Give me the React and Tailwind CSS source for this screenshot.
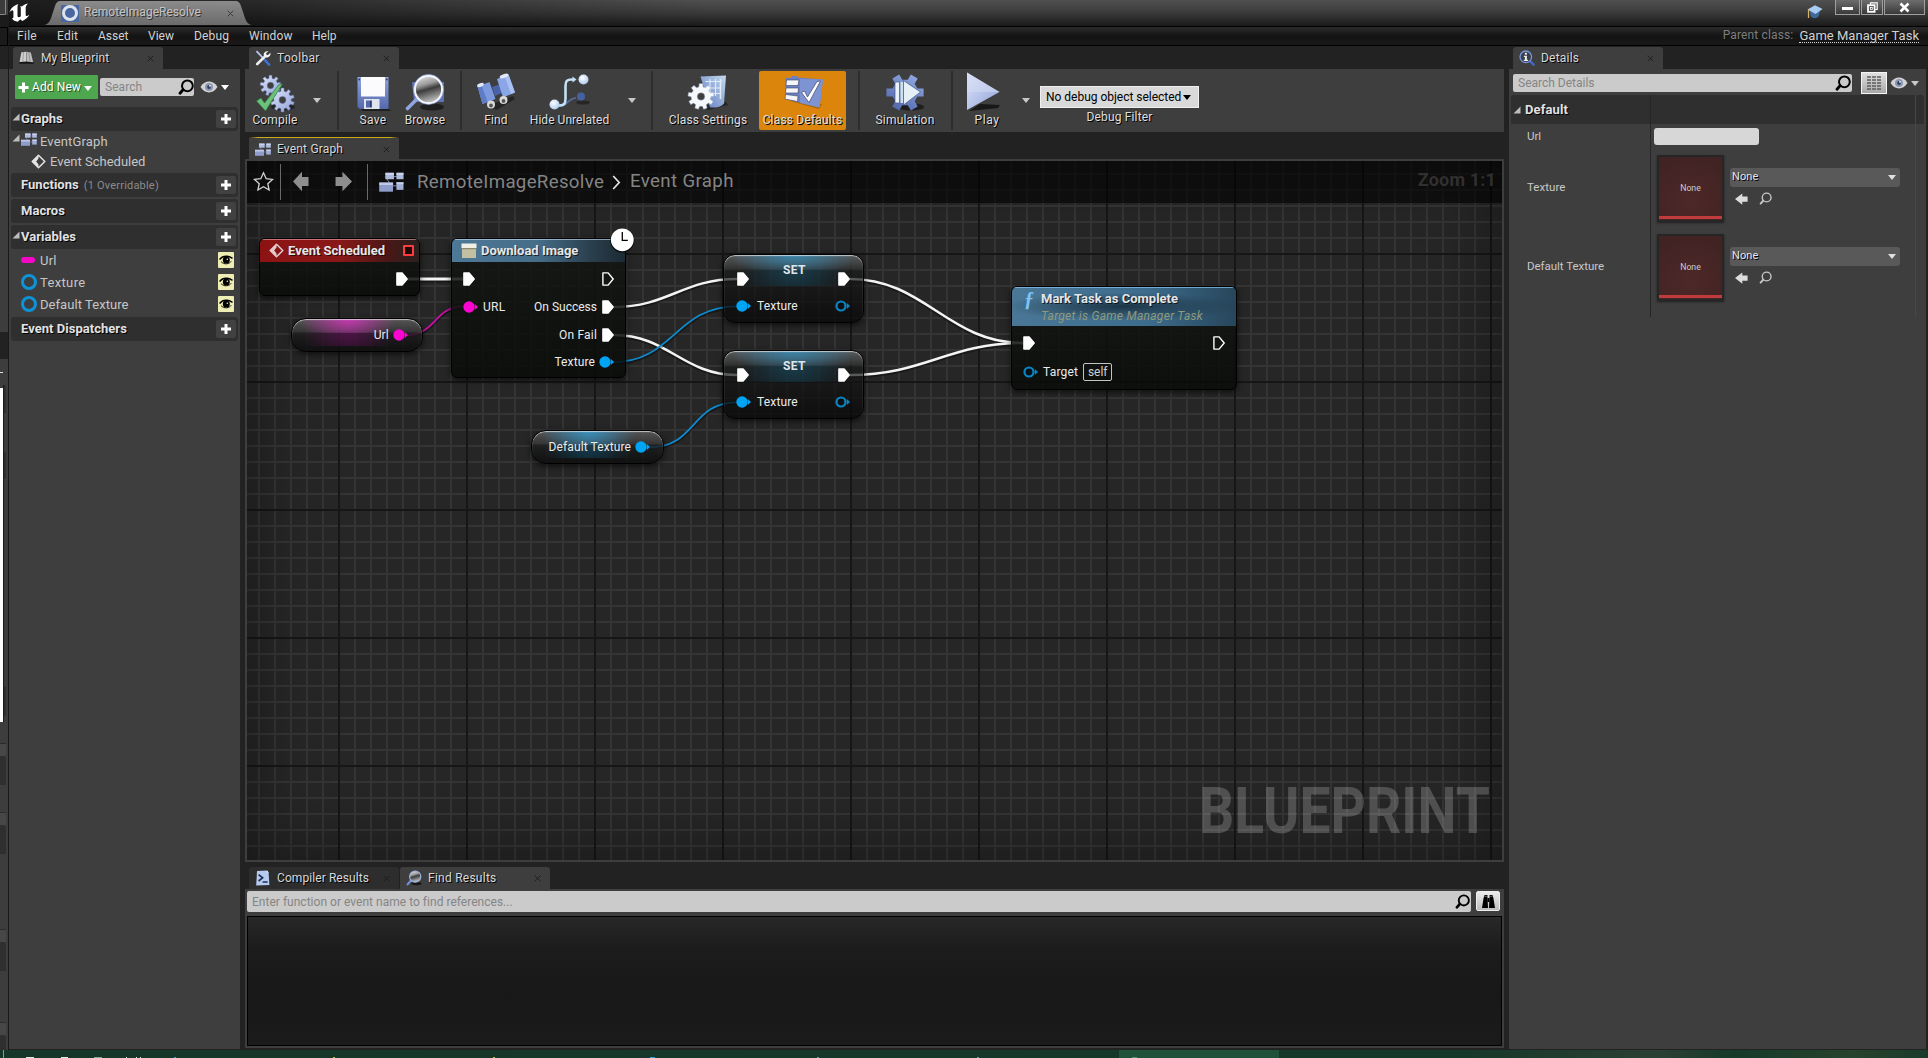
import React from "react";

/* ---------- icons ---------- */

function gearPath(cx, cy, outer, inner, teeth, hole) {
  const pts = [];
  const step = (Math.PI * 2) / teeth;
  for (let i = 0; i < teeth; i++) {
    const a = i * step - Math.PI / 2;
    [[-0.3, inner], [-0.2, outer], [0.2, outer], [0.3, inner]].forEach(([f, r]) => {
      pts.push(`${(cx + Math.cos(a + f * step) * r).toFixed(2)} ${(cy + Math.sin(a + f * step) * r).toFixed(2)}`);
    });
  }
  return `M${pts.join("L")}Z M${cx - hole} ${cy}a${hole} ${hole} 0 1 0 ${hole * 2} 0a${hole} ${hole} 0 1 0 ${-hole * 2} 0Z`;
}

const Defs = () => (
  <svg className="absolute h-0 w-0" aria-hidden="true">
    <defs>
      <linearGradient id="steel" x1="0" y1="0" x2="1" y2="1">
        <stop offset="0" stopColor="#dfe6fa" />
        <stop offset="1" stopColor="#8fa1d8" />
      </linearGradient>
      <linearGradient id="blueFace" x1="1" y1="0" x2="0" y2="1">
        <stop offset="0" stopColor="#c3dbee" />
        <stop offset="1" stopColor="#5f78c0" />
      </linearGradient>
      <linearGradient id="floppy" x1="0" y1="0" x2="0" y2="1">
        <stop offset="0" stopColor="#8ea5dd" />
        <stop offset="1" stopColor="#5469ad" />
      </linearGradient>
      <linearGradient id="lens" x1="0" y1="0" x2="0.3" y2="1">
        <stop offset="0" stopColor="#f2f2f2" />
        <stop offset="0.4" stopColor="#9a9a9a" />
        <stop offset="0.58" stopColor="#3c3c3c" />
        <stop offset="1" stopColor="#b8b8b8" />
      </linearGradient>
      <radialGradient id="ball" cx="0.4" cy="0.35" r="0.7">
        <stop offset="0" stopColor="#ffffff" />
        <stop offset="1" stopColor="#a9c9ee" />
      </radialGradient>
    </defs>
  </svg>
);

const Caret = ({ className = "", w = 8, h = 5, color = "#fff" }) => (
  <svg className={className} width={w} height={h} viewBox="0 0 8 5">
    <path d="M0 0h8L4 5z" fill={color} />
  </svg>
);

const Expander = ({ className = "" }) => (
  <svg className={className} width="8" height="8" viewBox="0 0 8 8">
    <path d="M7.5 0.5v7h-7z" fill="#bdbdbd" />
  </svg>
);

const Close = () => (
  <svg width="7" height="7" viewBox="0 0 7 7">
    <path d="M0.7 0.7l5.6 5.6M6.3 0.7L0.7 6.3" stroke="#1c1c1c" strokeWidth="0.9" />
  </svg>
);

const Lens = ({ size = 16, color = "#000", sw = 2 }) => (
  <svg width={size} height={size} viewBox="0 0 16 16" fill="none" stroke={color} strokeWidth={sw} strokeLinecap="round">
    <circle cx="9.4" cy="6.8" r="5.4" />
    <path d="M5 10.8l-3 3.4" strokeWidth={sw * 1.4} />
  </svg>
);

const Eye = () => (
  <svg width="18" height="12" viewBox="0 0 18 12">
    <path d="M0.5 6C3 2 6 0.6 9 0.6S15 2 17.5 6C15 10 12 11.4 9 11.4S3 10 0.5 6z" fill="#d3d3d3" />
    <circle cx="9" cy="6" r="4" fill="#8a97b4" />
    <circle cx="9" cy="6" r="1.9" fill="#33415f" />
    <circle cx="10" cy="4.8" r="0.9" fill="#fff" />
  </svg>
);

const GraphIcon = ({ w = 16, h = 13 }) => (
  <svg width={w} height={h} viewBox="0 0 16 13">
    <path d="M4 3L8 9M8 9h5M9 3h4" stroke="#8b97bb" strokeWidth="0.6" />
    <rect x="4" y="0.5" width="5.6" height="4.2" fill="#aebade" />
    <rect x="11.2" y="0.5" width="4.6" height="4.2" fill="#aebade" />
    <path d="M0 6.8h9v6H0z" fill="#8f9dca" />
    <rect x="11.2" y="6.6" width="4.6" height="5" fill="#a1aed6" />
    <path d="M4 0.5h5.6v1.4H4zM11.2 0.5h4.6v1.4h-4.6zM0 6.8h9v1.6H0zM11.2 6.6h4.6v1.4h-4.6z" fill="#d4dcf5" opacity="0.7" />
  </svg>
);

const EventDiamond = ({ size = 15, color = "#e4e4e4" }) => (
  <svg width={size} height={size} viewBox="0 0 15 15">
    <path d="M7.5 1.2l6.3 6.3-6.3 6.3-6.3-6.3z" fill="none" stroke={color} strokeWidth="1.5" strokeLinejoin="round" />
    <path d="M7.5 1.2v3.400L5.200 7.500l2.300 2.900v3.400L1.200 7.500z" fill={color} />
  </svg>
);

const Book = () => (
  <svg width="15" height="14" viewBox="0 0 15 14">
    <path d="M1 10.5h13l1 2.2H0z" fill="#161616" />
    <path d="M2.4 1.2L7 0.8 7 10.6 0.6 11z" fill="#cfcfcf" />
    <path d="M7.4 0.8l4.4 0.6 2.4 9.8-6.8-0.6z" fill="#bcbcbc" />
    <path d="M4.6 1l-0.8 10M9.8 1l1.2 10" stroke="#8a8a8a" strokeWidth="0.7" />
  </svg>
);

const Tools = () => (
  <svg width="16" height="16" viewBox="0 0 16 16">
    <path d="M1.5 1.2L9.5 9.6" stroke="#b9c6f0" strokeWidth="1.8" />
    <path d="M9.5 9.6l4.6 5" stroke="#3f6fd0" strokeWidth="2.6" strokeLinecap="round" />
    <path d="M2.2 14L9.8 6.6" stroke="#ededed" strokeWidth="2.6" strokeLinecap="round" />
    <path d="M13.6 0.9l-2.5 2.4 0.3 1.5 1.6 0.3 2.4-2.4c0.5 2-0.4 3.9-2.4 4.6-1.5 0.5-3.2-0.1-4-1.6-0.8-1.7 0-4.6 4.6-4.8z" fill="#f4f4f4" />
  </svg>
);

const DetailsIcon = () => (
  <svg width="16" height="16" viewBox="0 0 16 16">
    <path d="M10.6 10.6l4 4" stroke="#4468c8" strokeWidth="2.4" strokeLinecap="round" />
    <circle cx="6.8" cy="6.8" r="5.8" fill="#3a3f4c" stroke="#7795dd" strokeWidth="1.3" />
    <rect x="5.9" y="2.8" width="2" height="1.9" fill="#eee" />
    <path d="M4.9 5.8h3v4h1.1v1.2H4.8V9.8h1.1V7H4.9z" fill="#eee" />
  </svg>
);

const ScriptIcon = () => (
  <svg width="15" height="16" viewBox="0 0 15 16">
    <path d="M2 1l10-0.6 1.6 2L14.4 15 1.2 15.4z" fill="#b6c9ee" />
    <path d="M12 0.4l1.6 2-2 0.2z" fill="#f2f6ff" />
    <path d="M3.6 4.6l4 3.2-4 3.2M7.6 12h5" fill="none" stroke="#1e2e52" strokeWidth="1.7" />
  </svg>
);

const FindIcon = () => (
  <svg width="16" height="16" viewBox="0 0 16 16">
    <ellipse cx="10.5" cy="13.6" rx="5" ry="1.6" fill="#161616" />
    <path d="M1.6 14.4l4-4.6" stroke="#6f8fdc" strokeWidth="2.2" strokeLinecap="round" />
    <circle cx="9.2" cy="6.6" r="5.6" fill="url(#lens)" stroke="#9fb2e2" strokeWidth="1.2" />
  </svg>
);

const UnrealLogo = () => (
  <svg width="22" height="20" viewBox="0 0 22 20">
    <path
      d="M9.4 1.2C5.6 1.9 1.6 4.9 0.4 9.6c1.2-1.6 2.5-2.4 3.4-2.2 0.5 0.1 0.6 0.6 0.6 1.3v5.4c0 1-0.6 1.4-1.5 1.2 1.3 2.2 3.3 3.2 5.9 3.4l2.5-2.4 1.9 1.6c3.4-1.2 5.9-3.6 7.3-6.4-0.9 0.8-2 1.5-2.9 1.5-0.6 0-0.9-0.4-0.9-1.1V4.6c0-1.3 0.7-2.4 2.2-4.2-2.6 0.6-4.8 1.9-6.2 3.2-0.5-0.4-1-0.5-1.8-0.4 0.7 0.4 0.9 0.9 0.9 1.7v8.3c-0.5 0.7-1.1 1-1.9 1-1 0-1.4-0.6-1.4-1.6V5.2C8.500 3.400 8.600 2.300 9.400 1.200z"
      fill="#fff"
    />
  </svg>
);

const CompileIcon = () => (
  <svg width="44" height="40" viewBox="0 0 44 40">
    <ellipse cx="30" cy="34" rx="12" ry="3.4" fill="#1b1b1b" opacity="0.75" />
    <path fillRule="evenodd" d={gearPath(17.5, 12.5, 10.4, 7.4, 9, 3.2)} fill="url(#steel)" stroke="#5a6a9c" strokeWidth="0.5" />
    <path fillRule="evenodd" d={gearPath(29.5, 27, 12, 8.8, 10, 3.4)} fill="url(#steel)" stroke="#5a6a9c" strokeWidth="0.5" />
    <path d="M3.500 28l4.500-3 3.500 5L26 11.500l3.500-0.500L12.500 38z" fill="#6bc07a" stroke="#2f7d3f" strokeWidth="0.7" />
  </svg>
);

const SaveIcon = () => (
  <svg width="38" height="38" viewBox="0 0 38 38">
    <path d="M6 33h28l3 3H8z" fill="#1b1b1b" opacity="0.85" />
    <path d="M3.500 2h31v32H6l-2.500-2z" fill="url(#floppy)" />
    <path d="M7 2h24v19.500H7z" fill="#fbfbfd" />
    <circle cx="5.2" cy="4.500" r="0.900" fill="#2c3a6d" />
    <circle cx="32.800" cy="4.500" r="0.900" fill="#2c3a6d" />
    <path d="M10 24h15.500v10H10z" fill="#dfe4ee" />
    <path d="M12 25.500h4v7h-4z" fill="#5469ad" />
    <path d="M16 25.500h1.800v7H16z" fill="#2c3a6d" />
  </svg>
);

const BrowseIcon = () => (
  <svg width="42" height="40" viewBox="0 0 42 40">
    <ellipse cx="28" cy="34" rx="12" ry="3.600" fill="#161616" opacity="0.8" />
    <path d="M8 9h32v20H10z" fill="#5c73b8" />
    <path d="M3.500 35.500L13 26" stroke="#8fa6e0" strokeWidth="3.600" strokeLinecap="round" />
    <circle cx="24.500" cy="16.500" r="14" fill="url(#lens)" />
    <circle cx="24.500" cy="16.500" r="13.800" fill="none" stroke="#f2f5fc" strokeWidth="2.400" />
    <circle cx="24.500" cy="16.500" r="15.100" fill="none" stroke="#7f95cf" strokeWidth="0.600" />
  </svg>
);

const FindBigIcon = () => (
  <svg width="42" height="40" viewBox="0 0 42 40">
    <path d="M12 33l26-10 2 3-18 11z" fill="#1b1b1b" opacity="0.7" />
    <path d="M17 14l9-3 3 8-9 4z" fill="#4a62a8" />
    <path d="M2.500 13.500l12-4.500 6 17-13 5z" fill="#7c9ae0" />
    <path d="M2.500 13.500l4-1.500 6 17-5 2z" fill="#5f7cc6" />
    <path d="M22 6l11.500-4.500 6.500 18-12 5z" fill="#8aa6e6" />
    <path d="M33.500 1.500l6.500 18-4 1.600-6.500-18z" fill="#a9c0f2" />
    <ellipse cx="5.500" cy="12" rx="3.500" ry="1.800" fill="#e2e8f6" transform="rotate(-20 5.500 12)" />
    <ellipse cx="29" cy="3" rx="4.500" ry="1.800" fill="#e2e8f6" transform="rotate(-20 29 3)" />
    <circle cx="16" cy="31.500" r="4" fill="#d9d9d9" />
    <circle cx="16" cy="32.500" r="1.900" fill="#555" />
    <circle cx="28.500" cy="27" r="4" fill="#d9d9d9" />
    <circle cx="28.500" cy="28" r="1.900" fill="#555" />
  </svg>
);

const HideIcon = () => (
  <svg width="44" height="40" viewBox="0 0 44 40">
    <ellipse cx="35" cy="29.500" rx="7" ry="2" fill="#1d1d1d" opacity="0.7" />
    <path d="M10 33.500c10 0 10-8.500 18-8.500" fill="none" stroke="#5a6f9f" strokeWidth="1.700" />
    <circle cx="33" cy="23.500" r="4" fill="#4661a3" />
    <path d="M7 32.500h4.500c5 0 6-2 6-7V13c0-5 1.500-6.500 6-6.500h2" fill="none" stroke="#c3e2f5" strokeWidth="2.600" />
    <path d="M24.500 3.500l4 3-4 3z" fill="#c3e2f5" />
    <circle cx="6.500" cy="31.500" r="5" fill="url(#ball)" />
    <circle cx="35.500" cy="6.500" r="5" fill="url(#ball)" />
  </svg>
);

const ClassSettingsIcon = () => (
  <svg width="44" height="40" viewBox="0 0 44 40">
    <path d="M14 34l26-5 2 3-20 5z" fill="#1b1b1b" opacity="0.7" />
    <path d="M14.500 3.500L40 2.500l-2 28c-3 3.500-8 4.500-14 4z" fill="url(#blueFace)" />
    <path d="M19.500 8.500h16M19.500 15h15.500M24 20.500h10.500M24 6v17M29.500 6v17" stroke="#e8f1fb" strokeWidth="1.100" fill="none" opacity="0.9" />
    <path d="M34.500 6v20" stroke="#e8f1fb" strokeWidth="1.500" opacity="0.9" />
    <path fillRule="evenodd" d={gearPath(15, 23.500, 13, 9.800, 9, 3.800)} fill="#f6f9fc" stroke="#a9b6cf" strokeWidth="0.500" />
  </svg>
);

const ClassDefaultsIcon = () => (
  <svg width="44" height="40" viewBox="0 0 44 40">
    <path d="M9 28l29 8 3-5z" fill="#7c4a04" opacity="0.5" />
    <path d="M4.500 5l6-0.500 0.500-1.500h5l1 1.500L42 6.500 38.500 34.500 4 26z" fill="#6c80c2" />
    <path d="M19 6l23 0.500L38.500 34.500 19 30z" fill="#7e93d2" />
    <g fill="#f6f6f6" stroke="#3a456f" strokeWidth="0.600">
      <path d="M5.500 7h12.500l-1 5.500H5z" />
      <path d="M5 15h12.500l-0.500 5H4.500z" />
      <path d="M4.500 21.500L17 23l-0.500 5.500L4 26z" />
    </g>
    <path d="M20.500 19.500l3-1.500 3 6L36 8.500l3.500-0.500L28 29.500z" fill="#fff" stroke="#3a456f" strokeWidth="0.700" />
  </svg>
);

const SimulationIcon = () => (
  <svg width="44" height="40" viewBox="0 0 44 40">
    <ellipse cx="28" cy="34" rx="13" ry="3.600" fill="#161616" opacity="0.8" />
    <path fillRule="evenodd" d={gearPath(22, 19.500, 19, 13, 6, 0.100)} fill="url(#floppy)" transform="rotate(30 22 19.500)" />
    <path d="M12 9h4.500v21H12z" fill="#e9f3f7" stroke="#44548a" strokeWidth="0.700" />
    <path d="M17.500 9h2.500v21h-2.500z" fill="#cfe0ea" />
    <path d="M20.500 7.500L37.500 19 20.500 32z" fill="#e4f0f5" stroke="#44548a" strokeWidth="0.700" />
  </svg>
);

const PlayIcon = () => (
  <svg width="40" height="42" viewBox="0 0 40 42">
    <path d="M6 40l29-3 2-3-20-1z" fill="#141414" opacity="0.9" />
    <path d="M4 1.500L36.500 21 4 39z" fill="url(#steel)" />
    <path d="M4 1.500L36.500 21 4 21z" fill="#d3dbf3" opacity="0.55" />
  </svg>
);

const Binoculars = () => (
  <svg width="15" height="15" viewBox="0 0 15 15">
    <path d="M3.500 1h3v2.500L7 14H1L2.600 4zM8.500 1h3l0.900 3L14 14H8l0.500-10.500z" fill="#000" />
    <path d="M6.500 4h2v4h-2z" fill="#000" />
    <path d="M3.500 2.300h3M8.500 2.300h3" stroke="#cfcfcf" strokeWidth="0.500" />
  </svg>
);

const ArrowLeft = ({ w = 13, h = 12, color = "#dcdcdc", flip = false }) => (
  <svg width={w} height={h} viewBox="0 0 16 16" preserveAspectRatio="none" className={flip ? "-scale-x-100" : ""}>
    <path d="M0 8L9 0.500V4.500h6.500v7H9v4z" fill={color} />
  </svg>
);

/* ---------- shared pieces ---------- */

const shadow = "[text-shadow:1px_1px_0_#000]";

function Tab({ icon, label, className = "", track = "tracking-[0.12px]", active = true }) {
  return (
    <div className={`flex h-[22px] w-[150px] shrink-0 items-center rounded-t-[3px] pl-[5px] pr-[9px] ${active ? "bg-[#3e3e3e]" : "bg-[#2d2d2d]"} ${className}`}>
      <span className="flex w-[17px] shrink-0 justify-center">{icon}</span>
      <span className={`ml-[6px] flex-1 whitespace-nowrap text-[12px] leading-[14px] text-[#d8d8d8] ${track} ${shadow}`}>{label}</span>
      <Close />
    </div>
  );
}

function Section({ label, hint, expanded }) {
  return (
    <div className="flex h-[24px] items-center rounded-[3px] bg-[#2f2f2f] pr-[2px]">
      <span className="w-[10px] shrink-0">{expanded && <Expander className="mb-1 ml-px" />}</span>
      <span className={`text-[13px] font-bold leading-4 tracking-[0.03px] text-[#e2e2e2] ${shadow}`}>{label}</span>
      {hint && <span className="ml-[5px] mt-[2px] text-[11px] leading-4 tracking-[0.2px] text-[#8c8c8c]">{hint}</span>}
      <span className="ml-auto flex h-[18px] w-[20px] items-center justify-center rounded-[2px] bg-[#414141]">
        <svg width="12" height="12" viewBox="0 0 12 12">
          <path d="M4.500 1h3v3.500H11v3H7.500V11h-3V7.500H1v-3h3.500z" fill="#fff" />
        </svg>
      </span>
    </div>
  );
}

function Variable({ label, pill, track }) {
  return (
    <div className="flex h-[22px] items-center pl-[10px] pr-[4px]">
      {pill ? (
        <span className="h-[6px] w-[14px] rounded-[3px] bg-[#f607c8]" />
      ) : (
        <span className="h-[16px] w-[16px] rounded-full border-[3px] border-[#0d93d8]" />
      )}
      <span className={`mt-px text-[13px] leading-4 text-[#c6c6c6] ${pill ? "ml-[5px]" : "ml-[3px]"} ${track}`}>{label}</span>
      <span className="ml-auto flex h-[16px] w-[16px] items-center justify-center rounded-[1px] bg-[#eeeeb4]">
        <svg width="14" height="10" viewBox="0 0 14 10">
          <path d="M0.500 4.500C2.500 2 5 1 8 1.300c2.500 0.300 4 1.200 5.500 2" fill="none" stroke="#000" strokeWidth="1.500" />
          <path d="M2 6.600c1.500 1.700 3.500 2.300 5.500 2.200 2.500-0.200 3.800-1.300 4.700-2.500" fill="none" stroke="#000" strokeWidth="0.900" />
          <circle cx="7.300" cy="5" r="3.500" fill="#000" />
          <circle cx="8.300" cy="4.200" r="0.800" fill="#eeeeb4" />
        </svg>
      </span>
    </div>
  );
}

function ToolItem({ icon, label, className = "", track = "tracking-[0.15px]" }) {
  return (
    <div className={`flex h-full shrink-0 flex-col items-center ${className}`}>
      <div className="flex h-[42px] items-end justify-center">{icon}</div>
      <span className={`whitespace-nowrap text-[12px] leading-[14px] text-[#dedede] ${track} ${shadow}`}>{label}</span>
    </div>
  );
}

const Sep = ({ className = "" }) => <div className={`mt-[2px] h-[59px] w-[2px] shrink-0 bg-[#2d2d2d] ${className}`} />;

/* ---------- left edge of the window behind ---------- */

function BehindWindow() {
  return (
    <div className="flex w-[8px] shrink-0 flex-col bg-[#3d3d3d] pr-[2px] pt-0">
      <div className="h-[15px] shrink-0 rounded-br-[2px] border-b border-r border-[#8a8a8a] bg-[#3b3b3b]" />
      <div className="-mr-[2px] h-[12px] shrink-0 bg-[#1b1b1b]" />
      <div className="-mr-[2px] h-[19px] shrink-0 border border-l-0 border-black bg-[#1b1b1b]" />
      <div className="-mr-[2px] h-[23px] shrink-0 bg-[#222]" />
      <div className="h-[263px] shrink-0" />
      <div className="-mr-[2px] h-[27px] shrink-0 bg-[#222]" />
      <div className="h-[26px] shrink-0 pt-[13px]">
        <div className="h-px w-[3px] bg-[#ddd]" />
      </div>
      <div className="flex h-[337px] shrink-0">
        <div className="mt-[3px] w-[3px] bg-white" />
        <div className="w-px bg-[#1b1b1b]" />
        <div className="flex-1">
          <div className="h-[28px] bg-[#2f2f2f]" />
          <div className="mt-[39px] h-[27px] bg-[#2f2f2f]" />
          <div className="mt-[208px] h-[29px] bg-[#2f2f2f]" />
        </div>
      </div>
      {["mt-[21px]", "mt-[26px]", "mt-[74px]", "mt-[50px]"].map((m) => (
        <div key={m} className={`h-[43px] shrink-0 ${m}`}>
          <div className="h-[13px] border-t border-[#2c2c2c] bg-[#474747]" />
          <div className="h-[29px] rounded-tr-[3px] bg-[#2f2f2f]" />
        </div>
      ))}
    </div>
  );
}

/* ---------- title and menu ---------- */

function TitleBar() {
  return (
    <div className="flex h-[26px] items-start bg-[linear-gradient(90deg,rgba(16,16,16,.8)_0,rgba(16,16,16,.6)_250px,transparent_700px),linear-gradient(#505050,#3c3c3c_45%,#232323_85%,#1a1a1a)]">
      <div className="pt-[3px]">
        <UnrealLogo />
      </div>
      <div className="relative ml-[13px] flex h-[26px] w-[208px] items-center">
        <svg className="absolute left-0 top-0" width="208" height="26" viewBox="0 0 208 26">
          <defs>
            <linearGradient id="tabFill" x1="0" y1="0" x2="0" y2="1">
              <stop offset="0" stopColor="#8b8b8b" />
              <stop offset="1" stopColor="#6b6b6b" />
            </linearGradient>
          </defs>
          <path d="M0 25C4 24.500 5.500 22 7 18L11 6C12.200 2.500 13.500 1 17 1H191c3.500 0 4.800 1.500 6 5l4 12c1.500 4 3 6.500 7 7z" fill="url(#tabFill)" />
        </svg>
        <span className="relative ml-[17px] flex h-[17px] w-[18px] items-center justify-center bg-[#4a66a0]">
          <span className="h-[16px] w-[16px] rounded-full border-[3px] border-[#dde3ec]" />
        </span>
        <span className="relative ml-[5px] mt-[-2px] text-[12px] leading-[14px] tracking-[0.02px] text-[#c4c4c4] [text-shadow:1px_1px_0_#333]">RemoteImageResolve</span>
        <span className="relative ml-[26px] opacity-70">
          <Close />
        </span>
      </div>
      <div className="ml-auto mr-[12px] pt-[5px]">
        <svg width="16" height="15" viewBox="0 0 16 15">
          <path d="M3 6l0.500 5c2 2.500 5 3 8 0.500L13 6z" fill="#3e6a9c" />
          <path d="M0.500 4.500L8 0.300l7.600 3.800L8.500 9z" fill="#a9cdf0" />
          <path d="M1.500 4.500v8.500" stroke="#d9b36a" strokeWidth="1.200" />
        </svg>
      </div>
      <div className="mr-[3px] flex h-[15px] gap-px [&>div]:flex [&>div]:items-center [&>div]:justify-center [&>div]:border [&>div]:border-t-0 [&>div]:border-[#a0a0a0] [&>div]:bg-[linear-gradient(#6d6d6d,#3a3a3a)]">
        <div className="w-[25px]">
          <span className="mt-[3px] h-[3px] w-[11px] bg-white" />
        </div>
        <div className="w-[22px]">
          <svg width="11" height="11" viewBox="0 0 11 11" fill="none" stroke="#fff">
            <path d="M3.500 2.500v-1.700h6.700v6.700H8.500" strokeWidth="1.200" />
            <rect x="1" y="3.200" width="6.600" height="6.600" strokeWidth="1.800" />
            <rect x="3.300" y="5.500" width="2" height="2" strokeWidth="0.800" />
          </svg>
        </div>
        <div className="w-[41px]">
          <svg width="11" height="11" viewBox="0 0 11 11">
            <path d="M1.500 1.500l8 8M9.500 1.500l-8 8" stroke="#fff" strokeWidth="2.600" />
          </svg>
        </div>
      </div>
    </div>
  );
}

function MenuBar() {
  return (
    <div className="flex h-[20px] items-center border-y border-black bg-[linear-gradient(#2c2c2c,#131313_50%,#191919)] text-[12px] leading-[14px] text-[#d2d2d2]">
      <span className="w-[39px] pl-[9px] tracking-[0.3px]">
        <span className="-ml-px">File</span>
      </span>
      <span className="ml-[9px] w-[41px] tracking-[0.2px]">Edit</span>
      <span className="w-[50px] tracking-[-0.02px]">Asset</span>
      <span className="w-[46px]">View</span>
      <span className="w-[55px] tracking-[0.15px]">Debug</span>
      <span className="w-[63px] tracking-[0.12px]">Window</span>
      <span>Help</span>
      <span className="-mt-[2px] ml-auto tracking-[0.14px] text-[#7d7d7d]">Parent class:</span>
      <span className="ml-[6px] mr-[9px] border-b border-dotted border-[#d2d2d2] text-[13px] leading-[13px] tracking-[0.03px]">Game Manager Task</span>
    </div>
  );
}

/* ---------- my blueprint ---------- */

function BlueprintPanel() {
  return (
    <div className="flex w-[231px] shrink-0 flex-col">
      <div className="h-[23px] pl-[4px] pt-px">
        <Tab icon={<Book />} label="My Blueprint" />
      </div>
      <div className="flex-1 bg-[#3e3e3e] px-[2px]">
        <div className="flex h-[38px] items-start pl-[4px] pt-[6px]">
          <div className="flex h-[24px] w-[83px] items-center rounded-[1px] bg-[#4ea64f] pl-[3px]">
            <svg width="11" height="11" viewBox="0 0 11 11">
              <path d="M4 0.500h3V4h3.500v3H7v3.500H4V7H0.500V4H4z" fill="#fff" />
            </svg>
            <span className="ml-[3px] text-[12px] leading-[14px] tracking-[0.1px] text-white [text-shadow:1px_1px_0_#2a5a2a]">Add New</span>
            <Caret className="ml-[3px] mt-[2px]" />
          </div>
          <div className="ml-[2px] mt-[3px] flex h-[18px] w-[94px] items-center rounded-[2px] bg-[#cbcbcb] pl-[5px] pr-0">
            <span className="flex-1 text-[12px] leading-[14px] tracking-[0.05px] text-[#858585]">Search</span>
            <Lens />
          </div>
          <div className="ml-[6px] mt-[6px] flex items-center">
            <Eye />
            <Caret className="ml-[3px]" />
          </div>
        </div>
        <Section label="Graphs" expanded />
        <div className="flex h-[20px] items-center">
          <Expander className="mb-[6px] ml-px" />
          <span className="ml-px mb-[3px]">
            <GraphIcon />
          </span>
          <span className="ml-[3px] mt-[2px] text-[13px] leading-4 tracking-[0.14px] text-[#c6c6c6]">EventGraph</span>
        </div>
        <div className="flex h-[22px] items-center pb-px pl-[20px]">
          <EventDiamond />
          <span className="ml-[4px] text-[13px] leading-4 text-[#c6c6c6]">Event Scheduled</span>
        </div>
        <div className="flex flex-col gap-[2px]">
          <Section label="Functions" hint="(1 Overridable)" />
          <Section label="Macros" />
          <Section label="Variables" expanded />
        </div>
        <div className="pb-[2px]">
          <Variable label="Url" pill track="tracking-[0.2px]" />
          <Variable label="Texture" track="tracking-[0.35px]" />
          <Variable label="Default Texture" track="tracking-[0.06px]" />
        </div>
        <Section label="Event Dispatchers" />
      </div>
    </div>
  );
}

/* ---------- toolbar ---------- */

function Toolbar() {
  return (
    <div className="flex h-[63px] shrink-0 bg-[#3e3e3e]">
      <ToolItem className="w-[60px] pt-[2px]" icon={<CompileIcon />} label="Compile" />
      <div className="flex w-[24px] items-center justify-center">
        <Caret color="#c8c8c8" />
      </div>
      <Sep className="ml-[8px]" />
      <ToolItem className="ml-[8px] w-[52px] pt-[2px]" icon={<SaveIcon />} label="Save" track="tracking-[0.3px]" />
      <ToolItem className="w-[52px] pt-[2px]" icon={<BrowseIcon />} label="Browse" />
      <Sep className="ml-[9px]" />
      <ToolItem className="ml-[9px] w-[50px] pt-[2px]" icon={<FindBigIcon />} label="Find" />
      <ToolItem className="w-[97px] pt-[2px]" icon={<HideIcon />} label="Hide Unrelated" track="tracking-[0.04px]" />
      <div className="flex w-[27px] items-center justify-center">
        <Caret color="#c8c8c8" />
      </div>
      <Sep className="ml-[6px]" />
      <ToolItem className="ml-[11px] w-[88px] pt-[2px]" icon={<ClassSettingsIcon />} label="Class Settings" />
      <div className="ml-[7px] mt-[2px] h-[59px] rounded-[2px] bg-[#dc850c]">
        <ToolItem className="w-[87px]" icon={<ClassDefaultsIcon />} label="Class Defaults" track="tracking-[0.18px]" />
      </div>
      <Sep className="ml-[12px]" />
      <ToolItem className="ml-[10px] w-[70px] pt-[2px]" icon={<SimulationIcon />} label="Simulation" track="tracking-[0.2px]" />
      <Sep className="ml-[11px]" />
      <ToolItem className="ml-[9px] w-[50px] pt-[2px]" icon={<span className="mr-[8px]"><PlayIcon /></span>} label="Play" track="tracking-[0.6px]" />
      <div className="flex w-[28px] items-center justify-center">
        <Caret color="#c8c8c8" />
      </div>
      <div className="flex flex-col items-center pt-[17px]">
        <div className="flex h-[22px] w-[159px] items-center border border-[#f0f0f0] bg-[#d9d9d9] pl-[5px]">
          <span className="whitespace-nowrap text-[12px] leading-[14px] tracking-[-0.02px] text-black">No debug object selected</span>
          <Caret className="ml-[2px]" color="#000" />
        </div>
        <span className={`mt-[2px] text-[12px] leading-[14px] tracking-[0.14px] text-[#dedede] ${shadow}`}>Debug Filter</span>
      </div>
    </div>
  );
}

/* ---------- graph ---------- */

const ExecPin = ({ hollow }) => (
  <svg className="shrink-0" width="12" height="14" viewBox="0 0 12 14">
    <path d="M0.900 0.900h5.200L11.200 7l-5.100 6.100H0.900z" fill={hollow ? "none" : "#fff"} stroke="#fff" strokeWidth="1.400" strokeLinejoin="round" />
  </svg>
);

const DataPin = ({ color, ring }) => (
  <svg className="shrink-0" width="16" height="12" viewBox="0 0 16 12">
    {ring ? <circle cx="6" cy="6" r="4.500" fill="#0a1013" stroke={color} strokeWidth="2.200" /> : <circle cx="6" cy="6" r="5.700" fill={color} />}
    <path d="M11.800 3l3.200 3-3.200 3z" fill={color} />
  </svg>
);

const PINK = "#fb05d0";
const BLUE = "#00a4f4";

const wires = [
  { d: "M408 279H463", c: "#f4f4f4", w: 2.8 },
  { d: "M614 307C668 307 683 279 737 279", c: "#f4f4f4", w: 2.5 },
  { d: "M614 335C668 335 683 375 737 375", c: "#f4f4f4", w: 2.5 },
  { d: "M850 279C925 279 948 343 1023 343", c: "#f4f4f4", w: 2.5 },
  { d: "M850 375C925 375 948 343 1023 343", c: "#f4f4f4", w: 2.5 },
  { d: "M406 335.300C436 335.300 434 306.300 464 306.300", c: "#c910a8", w: 1.8 },
  { d: "M612 362.300C674 362.300 675 306.300 737 306.300", c: "#0f8ccf", w: 1.8 },
  { d: "M650 447.300C696 447.300 691 402.300 737 402.300", c: "#0f8ccf", w: 1.8 },
];

const nodeText = "whitespace-nowrap text-[12px] leading-[14px] text-[#ececec]";
const nodeTitle = "whitespace-nowrap text-[13px] font-bold leading-[15px] text-[#e6e6e6] [text-shadow:1px_1px_0_rgba(0,0,0,.7)]";
const nodeBox = "absolute overflow-hidden rounded-[6px] border border-black bg-[linear-gradient(rgba(20,22,20,.86),rgba(8,11,8,.86))] shadow-[0_2px_6px_rgba(0,0,0,.65)]";
const pillBox = "absolute overflow-hidden border border-black shadow-[0_2px_6px_rgba(0,0,0,.65),inset_0_1px_1px_rgba(255,255,255,.65)]";

function SetNode({ className }) {
  return (
    <div
      className={`${pillBox} left-[723px] h-[69px] w-[141px] rounded-[12px] [background:radial-gradient(ellipse_64px_22px_at_50%_0,rgba(52,140,185,.85),transparent)_0_0/100%_15px_no-repeat,radial-gradient(ellipse_60px_46px_at_50%_0,rgba(20,80,105,.6),transparent_90%)_0_15px/100%_16px_no-repeat,linear-gradient(rgba(95,95,95,.9),rgba(50,52,52,.8)_14px,rgba(26,28,28,.7)_15px,rgba(18,18,18,.7)_32px,rgba(8,8,8,.8))] ${className}`}
    >
      <div className="mt-[17px] flex h-[14px] items-center justify-between pl-[13px] pr-[13px]">
        <ExecPin />
        <span className="relative -top-[9px] left-px whitespace-nowrap text-[12px] font-bold leading-[14px] tracking-[0.4px] text-[#dfe6ea]">SET</span>
        <ExecPin />
      </div>
      <div className="mt-[13px] flex h-[14px] items-center pl-[12px] pr-[12px]">
        <DataPin color={BLUE} />
        <span className={`ml-[5px] ${nodeText} tracking-[0.16px]`}>Texture</span>
        <span className="ml-auto">
          <DataPin color="#0a86c6" ring />
        </span>
      </div>
    </div>
  );
}

function Graph() {
  return (
    <div className="relative h-[699px] w-[1255px] overflow-hidden bg-[#262626]">
      <div className="absolute inset-0 [background:linear-gradient(90deg,#161616_2px,transparent_2px)_91px_0/128px_128px,linear-gradient(#161616_2px,transparent_2px)_0_92px/128px_128px,linear-gradient(90deg,#343434_2px,transparent_2px)_11px_0/16px_16px,linear-gradient(#343434_2px,transparent_2px)_0_12px/16px_16px]" />
      <div className="absolute inset-0 shadow-[inset_0_0_70px_rgba(0,0,0,.4)]" />

      <div className="absolute left-[952px] top-[618px] h-[64px] w-[290px]">
        <div className="origin-left scale-x-[0.855] whitespace-nowrap text-[64.500px] font-bold leading-[64px] text-white/20">BLUEPRINT</div>
      </div>

      <div className="absolute -left-[247px] -top-[161px] h-[1058px] w-[1928px]">
        <svg className="absolute inset-0" width="1928" height="1058">
          {wires.map((w) => (
            <g key={w.d} fill="none">
              <path d={w.d} stroke="#000" strokeOpacity="0.35" strokeWidth={w.w + 2} transform="translate(0 1)" />
              <path d={w.d} stroke={w.c} strokeWidth={w.w} />
            </g>
          ))}
        </svg>

        <div className={`${nodeBox} left-[259px] top-[238px] h-[58px] w-[161px]`}>
          <div className="flex h-[23px] items-center bg-[linear-gradient(90deg,#8d1313,#8a1818_50%,#4a1716_80%,#2a2020)] pl-[9px] pr-[5px] shadow-[inset_0_1px_0_rgba(255,190,190,.55)]">
            <EventDiamond size={15} color="#e3caca" />
            <span className={`ml-[4px] flex-1 ${nodeTitle}`}>Event Scheduled</span>
            <span className="h-[11px] w-[11px] rounded-[1px] border-2 border-[#ff3c3c] bg-[#1c0808]" />
          </div>
          <div className="flex h-[34px] items-center justify-end pr-[11px]">
            <ExecPin />
          </div>
        </div>

        <div className={`${nodeBox} left-[451px] top-[238px] h-[140px] w-[175px]`}>
          <div className="flex h-[23px] items-center bg-[linear-gradient(90deg,#4d7897,#456d88_50%,#2a3f4d_80%,#1c2a33)] pl-[9px] shadow-[inset_0_1px_0_rgba(200,230,255,.6)]">
            <svg width="16" height="15" viewBox="0 0 16 15">
              <path d="M0.500 0.500h15v4.500h-15z" fill="#f0efe4" />
              <path d="M1 6h14v9H1z" fill="#c3bfa3" />
              <path d="M0.500 5h15v1.200h-15z" fill="#8d8a72" />
            </svg>
            <span className={`ml-[4px] ${nodeTitle}`}>Download Image</span>
          </div>
          <div className="pl-[11px] pr-[11px] pt-[3px]">
            <div className="flex h-[28px] items-center justify-between">
              <ExecPin />
              <ExecPin hollow />
            </div>
            <div className="flex h-[28px] items-center">
              <DataPin color={PINK} />
              <span className={`ml-[4px] ${nodeText} -mt-px tracking-[0.3px]`}>URL</span>
              <span className={`ml-auto mr-[5px] ${nodeText}`}>On Success</span>
              <ExecPin />
            </div>
            <div className="flex h-[28px] items-center justify-end">
              <span className={`mr-[5px] ${nodeText} tracking-[0.2px]`}>On Fail</span>
              <ExecPin />
            </div>
            <div className="-mr-px flex h-[26px] items-center justify-end">
              <span className={`mr-[4px] ${nodeText} tracking-[0.12px]`}>Texture</span>
              <DataPin color={BLUE} />
            </div>
          </div>
        </div>

        <svg className="absolute left-[609px] top-[227px]" width="27" height="27" viewBox="0 0 27 27">
          <circle cx="13.300" cy="13.500" r="12" fill="#000" opacity="0.85" />
          <circle cx="13.300" cy="12.800" r="11.400" fill="#fff" />
          <path d="M13.300 5v8.300h5.500" fill="none" stroke="#000" strokeWidth="1.300" />
        </svg>

        <div className={`${pillBox} left-[291px] top-[318px] flex h-[34px] w-[132px] items-center justify-end rounded-[15px] pr-[13px] [background:radial-gradient(ellipse_48px_26px_at_43%_0,rgba(215,50,190,.85),transparent)_0_0/100%_14px_no-repeat,radial-gradient(ellipse_46px_34px_at_43%_0,rgba(95,15,85,.7),transparent)_0_14px/100%_13px_no-repeat,linear-gradient(rgba(90,90,90,.9),rgba(55,55,55,.85)_13px,rgba(30,28,30,.8)_14px,rgba(12,12,12,.85))]`}>
          <span className={`mr-[4px] ${nodeText} tracking-[0.2px]`}>Url</span>
          <DataPin color={PINK} />
        </div>

        <div className={`${pillBox} left-[531px] top-[430px] flex h-[34px] w-[133px] items-center justify-end rounded-[15px] pr-[12px] [background:radial-gradient(ellipse_48px_26px_at_43%_0,rgba(52,150,200,.9),transparent)_0_0/100%_14px_no-repeat,radial-gradient(ellipse_46px_34px_at_43%_0,rgba(15,75,105,.7),transparent)_0_14px/100%_13px_no-repeat,linear-gradient(rgba(90,90,90,.9),rgba(55,55,55,.85)_13px,rgba(28,30,30,.8)_14px,rgba(12,12,12,.85))]`}>
          <span className={`mr-[4px] ${nodeText} tracking-[0.1px]`}>Default Texture</span>
          <DataPin color={BLUE} />
        </div>

        <SetNode className="top-[254px]" />
        <SetNode className="top-[350px]" />

        <div className={`${nodeBox} left-[1011px] top-[286px] h-[104px] w-[226px]`}>
          <div className="h-[39px] bg-[radial-gradient(ellipse_120px_14px_at_50%_50%,#1d3646,transparent),linear-gradient(90deg,#4a7796,#3d6c8d_60%,#27465b)] pl-[12px] pt-[4px] shadow-[inset_0_1px_0_rgba(140,200,240,.7)]">
            <div className="flex h-[15px] items-center">
              <span className="w-[14px] shrink-0 font-[Liberation_Serif] text-[20px] font-bold italic leading-[16px] text-[#7cc4f5]">ƒ</span>
              <span className={`ml-[3px] ${nodeTitle}`}>Mark Task as Complete</span>
            </div>
            <div className="ml-[17px] mt-[3px] whitespace-nowrap text-[12px] italic leading-[14px] tracking-[0.28px] text-[#8f9a7c]">Target is Game Manager Task</div>
          </div>
          <div className="mt-[10px] flex h-[14px] items-center justify-between pl-[11px] pr-[11px]">
            <ExecPin />
            <ExecPin hollow />
          </div>
          <div className="mt-[13px] flex h-[18px] items-center pl-[11px]">
            <DataPin color="#0a86c6" ring />
            <span className={`ml-[4px] ${nodeText} tracking-[0.2px]`}>Target</span>
            <span className="ml-[5px] flex h-[18px] w-[29px] items-center justify-center rounded-[2px] border border-[#c4c4c4] text-[12px] leading-[14px] text-[#d0d0d0]">self</span>
          </div>
        </div>
      </div>

      <div className="absolute inset-x-0 top-0 flex h-[42px] items-center bg-black/60 pb-px text-[#858585]">
        <svg className="ml-[6px]" width="21" height="21" viewBox="0 0 21 21">
          <path d="M10.500 1.800l2.700 5.900 6.300 0.700-4.700 4.300 1.300 6.300-5.600-3.200-5.600 3.200 1.300-6.300L1.500 8.400l6.300-0.700z" fill="none" stroke="#d2d2d2" strokeWidth="1.300" />
        </svg>
        <div className="ml-[6px] h-[36px] w-px bg-[#6a6a6a]" />
        <div className="ml-[12px]">
          <ArrowLeft w={16} h={21} color="#8e8e8e" />
        </div>
        <div className="ml-[26px]">
          <ArrowLeft w={17} h={21} color="#8e8e8e" flip />
        </div>
        <div className="ml-[15px] h-[36px] w-px bg-[#6a6a6a]" />
        <div className="ml-[11px]">
          <GraphIcon w={25} h={20} />
        </div>
        <span className="ml-[13px] mt-px text-[18.670px] leading-[22px] tracking-[0.320px]">RemoteImageResolve</span>
        <svg className="ml-[8px] mt-[2px]" width="9" height="15" viewBox="0 0 9 15">
          <path d="M1.200 1l6 6.500-6 6.500" fill="none" stroke="#e4e4e4" strokeWidth="1.700" />
        </svg>
        <span className="ml-[9px] mt-[-1px] text-[18.670px] leading-[22px] tracking-[0.360px]">Event Graph</span>
        <span className="ml-auto mr-[6px] mt-[-3px] text-[18px] font-bold leading-[22px] tracking-[0.160px] text-[#303030]">Zoom 1:1</span>
      </div>
    </div>
  );
}

/* ---------- results ---------- */

function Results() {
  return (
    <>
      <div className="flex h-[27px] shrink-0 items-end gap-px pl-[4px]">
        <Tab icon={<ScriptIcon />} label="Compiler Results" active={false} track="tracking-[0.08px]" />
        <Tab icon={<FindIcon />} label="Find Results" track="tracking-[0.25px]" />
      </div>
      <div className="flex h-[159px] shrink-0 flex-col gap-[4px] bg-[#3e3e3e] p-[2px]">
        <div className="flex h-[21px]">
          <div className="flex w-[1224px] items-center rounded-[2px] bg-[#cbcbcb] pl-[5px] pr-px">
            <span className="flex-1 text-[12px] leading-[14px] tracking-[0.020px] text-[#858585]">Enter function or event name to find references...</span>
            <Lens size={15} />
          </div>
          <div className="ml-[5px] flex h-[20px] w-[24px] items-center justify-center rounded-[2px] border border-[#eee] bg-[linear-gradient(#ececec,#bdbdbd)]">
            <Binoculars />
          </div>
        </div>
        <div className="flex-1 border border-black bg-[linear-gradient(#282828,#1c1c1c_25%,#181818_60%,#1b1b1b)]" />
      </div>
    </>
  );
}

/* ---------- details ---------- */

function AssetRow({ label, track }) {
  return (
    <div className="flex h-[79px]">
      <div className={`w-[139px] shrink-0 pl-[16px] pt-[31px] text-[11.500px] leading-[14px] text-[#c8c8c8] ${track}`}>{label}</div>
      <div className="ml-[7px] mt-[6px] flex h-[67px] w-[67px] flex-col border-2 border-[#262626] bg-[radial-gradient(circle_at_50%_70%,#4d2828,#3f2223)] shadow-[0_1px_2px_rgba(0,0,0,.5)]">
        <div className="flex flex-1 items-center justify-center pt-[2px] text-[8.700px] leading-[10px] text-[#cfc9c9]">None</div>
        <div className="mb-px h-[3px] bg-[#c03b3b]" />
      </div>
      <div className="ml-[6px] mt-[19px]">
        <div className="flex h-[19px] w-[170px] items-center justify-between rounded-[3px] bg-[#595959] pb-[2px] pl-[2px] pr-[4px]">
          <span className={`text-[11px] leading-[14px] tracking-[0.100px] text-[#e6e6e6] ${shadow}`}>None</span>
          <Caret className="mt-[2px]" color="#e0e0e0" />
        </div>
        <div className="ml-[5px] mt-[5px] flex items-center gap-[11px]">
          <ArrowLeft />
          <Lens size={13} color="#c8c8c8" sw={1.7} />
        </div>
      </div>
    </div>
  );
}

function Details() {
  return (
    <div className="flex w-[417px] shrink-0 flex-col">
      <div className="h-[23px] pl-[4px] pt-px">
        <Tab icon={<DetailsIcon />} label="Details" track="tracking-[0.210px]" />
      </div>
      <div className="flex-1 bg-[#3e3e3e] pl-[2px] pr-[2px]">
        <div className="flex h-[26px] items-start pl-[2px] pt-[3px]">
          <div className="mt-[2px] flex h-[18px] w-[339px] items-center rounded-[2px] bg-[#cbcbcb] pl-[5px] pr-px">
            <span className="flex-1 text-[12px] leading-[14px] text-[#858585]">Search Details</span>
            <Lens />
          </div>
          <div className="ml-[9px] flex h-[22px] w-[26px] items-center justify-center border border-[#f4f4f4] bg-[linear-gradient(#e0e0e0,#a8a8a8)]">
            <svg width="14" height="14" viewBox="0 0 14 14" stroke="#5d5d5d" strokeWidth="1.600">
              <path d="M0 1h4M0 4h4M0 7h4M0 10h4M0 13h4M5 1h4M5 4h4M5 7h4M5 10h4M5 13h4M10 1h4M10 4h4M10 7h4M10 10h4M10 13h4" />
            </svg>
          </div>
          <div className="ml-[3px] mt-[5px] flex items-center">
            <Eye />
            <Caret className="ml-[3px]" color="#c8c8c8" />
          </div>
        </div>
        <div className="relative h-[222px]">
          <div className="flex h-[29px] items-center rounded-t-[3px] bg-[#2f2f2f]">
            <Expander className="ml-[2px] mt-px" />
            <span className={`ml-[4px] text-[13px] font-bold leading-4 tracking-[0.130px] text-[#e2e2e2] ${shadow}`}>Default</span>
          </div>
          <div className="flex h-[25px] items-center">
            <span className="-mt-[2px] w-[143px] pl-[16px] text-[11.500px] leading-[14px] text-[#c8c8c8]">Url</span>
            <span className="h-[17px] w-[105px] rounded-[3px] bg-[#d7d7d7]" />
          </div>
          <AssetRow label="Texture" track="tracking-[0.060px]" />
          <AssetRow label="Default Texture" track="tracking-[-0.030px]" />
          <div className="absolute inset-y-0 left-[139px] w-px bg-[#262626]" />
          <div className="absolute inset-y-0 right-[8px] w-px bg-[#474747]" />
        </div>
      </div>
    </div>
  );
}

/* ---------- desktop strip under the window ---------- */

const specks = [
  ["#dfe6e2", 26, 8], ["#dfe6e2", 61, 7], ["#8aa195", 94, 8], ["#dfe6e2", 126, 1], ["#dfe6e2", 136, 1], ["#dfe6e2", 140, 1],
  ["#2f9fc0", 174, 2], ["#b9c040", 333, 2], ["#b9c040", 493, 2], ["#2fa3c8", 650, 5], ["#6f9ab0", 817, 2], ["#6f9ab0", 977, 2], ["#5d8f78", 1132, 5],
];

function DesktopStrip() {
  return (
    <div className="relative h-[8px] w-full bg-[linear-gradient(90deg,#17362a,#16382a_60%,#16382a_76%,#2b4034_86%,#163a2a_90%,#26432c_96%,#1a3a2c)]">
      <div className="absolute left-[1119px] top-0 h-full w-[160px] bg-[#20523a]" />
      <div className="absolute left-[3px] top-0 h-full w-px bg-[#86998f]" />
      {specks.map(([c, x, w]) => (
        <span key={x} className="absolute bottom-0 h-px" style={{ left: x, width: w, background: c }} />
      ))}
    </div>
  );
}

export default function App() {
  return (
    <div className="flex h-[1058px] w-[1928px] flex-col overflow-hidden bg-[#222] font-[Roboto,sans-serif]">
      <Defs />
      <div className="flex h-[1050px] shrink-0 overflow-hidden">
        <BehindWindow />
        <div className="flex w-[1920px] shrink-0 flex-col border-l border-[#1a1a1a] bg-[#222]">
          <TitleBar />
          <MenuBar />
          <div className="flex h-[1003px] shrink-0">
            <BlueprintPanel />
            <div className="ml-[5px] mr-[5px] flex w-[1259px] shrink-0 flex-col">
              <div className="h-[23px] shrink-0 pl-[4px] pt-px">
                <Tab icon={<Tools />} label="Toolbar" track="tracking-[0.300px]" />
              </div>
              <Toolbar />
              <div className="h-[27px] shrink-0 pl-[4px] pt-[5px]">
                <div className="h-px w-[150px] bg-[linear-gradient(90deg,transparent,#c9ab1c_6%,#c9ab1c_94%,transparent)]" />
                <Tab icon={<GraphIcon />} label="Event Graph" track="tracking-[0.180px]" className="h-[21px] rounded-t-none" />
              </div>
              <div className="shrink-0 bg-[#3e3e3e] p-[2px]">
                <Graph />
              </div>
              <Results />
            </div>
            <Details />
          </div>
        </div>
      </div>
      <DesktopStrip />
    </div>
  );
}
